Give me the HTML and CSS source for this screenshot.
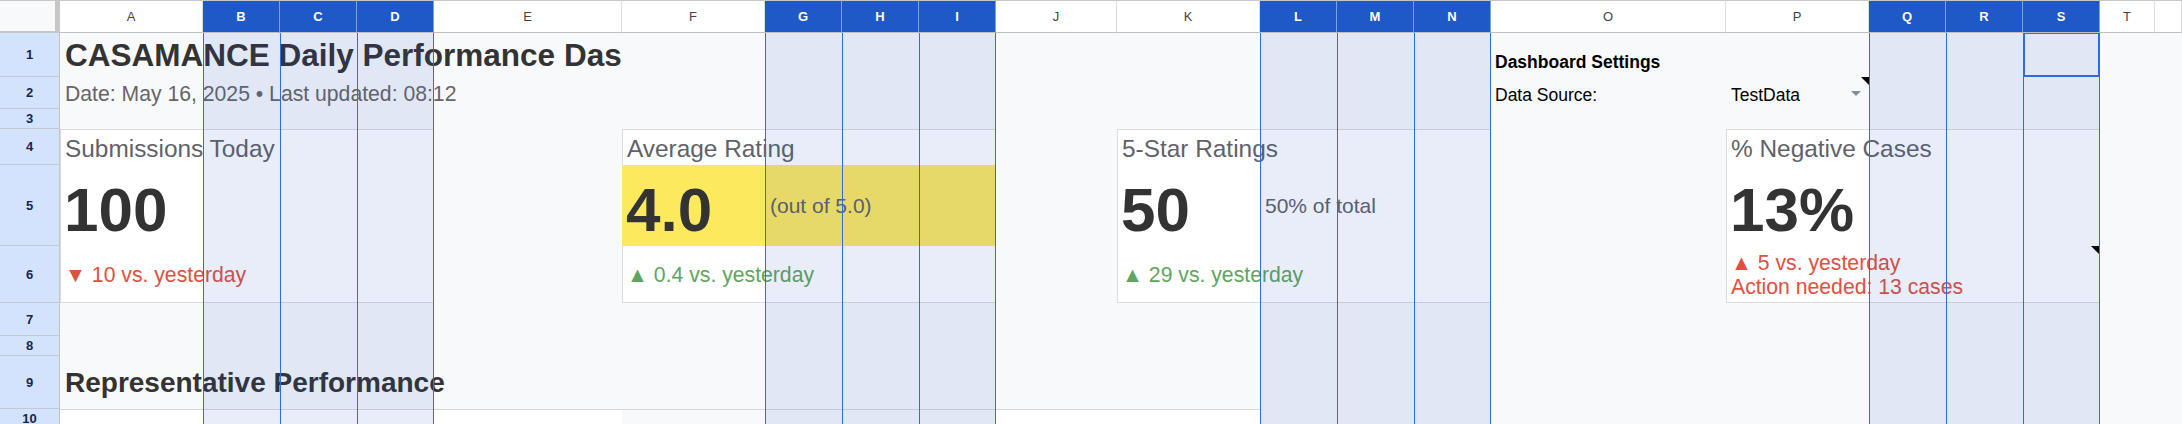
FILE: index.html
```html
<!DOCTYPE html>
<html lang="en">
<head>
<meta charset="utf-8">
<title>CASAMANCE Daily Performance Dashboard</title>
<link rel="stylesheet" href="styles.css">
</head>
<body>
<div class="sheet">
  <!-- column headers -->
  <div class="corner"></div>
  <div class="ch">A</div>
  <div class="ch sel">B</div>
  <div class="ch sel">C</div>
  <div class="ch sel">D</div>
  <div class="ch">E</div>
  <div class="ch">F</div>
  <div class="ch sel">G</div>
  <div class="ch sel">H</div>
  <div class="ch sel">I</div>
  <div class="ch">J</div>
  <div class="ch">K</div>
  <div class="ch sel">L</div>
  <div class="ch sel">M</div>
  <div class="ch sel">N</div>
  <div class="ch">O</div>
  <div class="ch">P</div>
  <div class="ch sel">Q</div>
  <div class="ch sel">R</div>
  <div class="ch sel">S</div>
  <div class="ch">T</div>
  <div class="ch"></div>

  <!-- row headers -->
  <div class="rh">1</div>
  <div class="rh">2</div>
  <div class="rh">3</div>
  <div class="rh">4</div>
  <div class="rh">5</div>
  <div class="rh">6</div>
  <div class="rh">7</div>
  <div class="rh">8</div>
  <div class="rh">9</div>
  <div class="rh">10</div>

  <!-- header block -->
  <div class="title">CASAMANCE Daily Performance Dashboard</div>
  <div class="subtitle">Date: May 16, 2025 • Last updated: 08:12</div>

  <div class="settings-title">Dashboard Settings</div>
  <div class="settings-label">Data Source:</div>
  <div class="settings-value">
    <span>TestData</span>
    <span class="dd-arrow"></span>
    <span class="note"></span>
  </div>

  <!-- KPI cards -->
  <div class="card card-1">
    <div class="kpi-label">Submissions Today</div>
    <div class="kpi-value">100</div>
    <div class="kpi-change down">▼ 10 vs. yesterday</div>
  </div>

  <div class="card card-2">
    <div class="kpi-label">Average Rating</div>
    <div class="kpi-band"></div>
    <div class="kpi-value">4.0</div>
    <div class="kpi-aside">(out of 5.0)</div>
    <div class="kpi-change up">▲ 0.4 vs. yesterday</div>
  </div>

  <div class="card card-3">
    <div class="kpi-label">5-Star Ratings</div>
    <div class="kpi-value">50</div>
    <div class="kpi-aside">50% of total</div>
    <div class="kpi-change up">▲ 29 vs. yesterday</div>
  </div>

  <div class="card card-4">
    <div class="kpi-label">% Negative Cases</div>
    <div class="kpi-value">13%</div>
    <div class="kpi-change down multi">
      <span>▲ 5 vs. yesterday</span>
      <span>Action needed: 13 cases</span>
    </div>
  </div>

  <div class="section-title">Representative Performance</div>
  <div class="table-head th-1"></div>
  <div class="table-head th-2"></div>
  <div class="table-head th-3"></div>

  <!-- column selection overlays -->
  <div class="sel-col col-b"></div>
  <div class="sel-col col-c"></div>
  <div class="sel-col col-d end"></div>
  <div class="sel-col col-g"></div>
  <div class="sel-col col-h"></div>
  <div class="sel-col col-i end"></div>
  <div class="sel-col col-l"></div>
  <div class="sel-col col-m"></div>
  <div class="sel-col col-n end"></div>
  <div class="sel-col col-q"></div>
  <div class="sel-col col-r"></div>
  <div class="sel-col col-s end"></div>

  <div class="active-cell"></div>
  <div class="note-cell"><span class="note-tri"></span></div>
</div>
</body>
</html>
```

FILE: styles.css
```css
* { box-sizing: border-box; }

html, body {
  margin: 0;
  padding: 0;
}

body {
  width: 2182px;
  height: 424px;
  overflow: hidden;
  background: #f8f9fa;
  font-family: "Liberation Sans", Arial, sans-serif;
}

.sheet {
  display: grid;
  grid-template-columns: 60px 143px 77px 77px 77px 188px 143px 77px 77px 77px 121px 143px 77px 77px 77px 235px 143px 77px 77px 77px 55px 1fr;
  grid-template-rows: 33px 44px 32px 20px 36px 81px 57px 33px 20px 53px 20px;
  width: 2182px;
  height: 429px;
  background: #f8f9fa;
}

/* ---------- headers ---------- */
.corner {
  grid-row: 1;
  background: #f8f9fa;
  border-top: 1px solid #c7c7c7;
  border-right: 5px solid #c6c6c6;
  border-bottom: 2px solid #c6c6c6;
}

.ch {
  grid-row: 1;
  display: flex;
  align-items: center;
  justify-content: center;
  background: #fff;
  border-top: 1px solid #c7c7c7;
  border-bottom: 1px solid #c0c0c0;
  border-right: 1px solid #dadce0;
  color: #444;
  font-family: "Liberation Sans", Arial, sans-serif;
  font-size: 13px;
}

.ch.sel {
  background: #1f58c7;
  color: #fff;
  font-weight: bold;
  border-right-color: #7e9ee0;
}

.rh {
  grid-column: 1;
  display: flex;
  align-items: center;
  justify-content: center;
  background: #d3e3fd;
  border-right: 1px solid #c4c4c4;
  border-bottom: 1px solid #c3c9d3;
  color: #14274e;
  font-size: 13px;
  font-weight: bold;
  overflow: hidden;
}

/* ---------- title block ---------- */
.title {
  grid-column: 2 / 7;
  grid-row: 2;
  display: flex;
  align-items: center;
  padding: 1px 0 0 5px;
  overflow: hidden;
  white-space: nowrap;
  font-size: 31.5px;
  font-weight: bold;
  color: #333;
}

.subtitle {
  grid-column: 2 / 7;
  grid-row: 3;
  display: flex;
  align-items: flex-end;
  padding: 0 0 3px 5px;
  white-space: nowrap;
  font-size: 21.2px;
  color: #666;
}

.settings-title {
  grid-column: 16;
  grid-row: 2;
  display: flex;
  align-items: flex-end;
  padding: 0 0 4px 4px;
  white-space: nowrap;
  font-size: 17.5px;
  font-weight: bold;
  color: #000;
}

.settings-label {
  grid-column: 16;
  grid-row: 3;
  display: flex;
  align-items: flex-end;
  padding: 0 0 3px 4px;
  white-space: nowrap;
  font-size: 17.5px;
  color: #000;
}

.settings-value {
  grid-column: 17;
  grid-row: 3;
  position: relative;
  display: flex;
  align-items: flex-end;
  justify-content: space-between;
  padding: 0 8px 3px 5px;
  white-space: nowrap;
  font-size: 17.5px;
  color: #000;
}

.dd-arrow {
  align-self: center;
  margin-top: 4px;
  width: 0;
  height: 0;
  border-left: 5px solid transparent;
  border-right: 5px solid transparent;
  border-top: 5px solid #86909c;
}

.note {
  position: absolute;
  top: 0;
  right: 0;
  width: 0;
  height: 0;
  border-top: 8px solid #000;
  border-left: 8px solid transparent;
}

/* ---------- KPI cards ---------- */
.card {
  grid-row: 5 / 8;
  display: grid;
  grid-template-columns: 143px 77px 77px 77px;
  grid-template-rows: 36px 81px 57px;
  background: #fff;
  box-shadow: inset 1px 1px 0 #dadce0, inset 0 -1px 0 #dadce0;
}

.card-1 { grid-column: 2 / 6; }
.card-2 { grid-column: 7 / 11; }
.card-3 { grid-column: 12 / 16; }
.card-4 { grid-column: 17 / 21; }

.kpi-label {
  grid-column: 1 / -1;
  grid-row: 1;
  display: flex;
  align-items: flex-end;
  padding: 0 0 2px 5px;
  white-space: nowrap;
  font-size: 24.4px;
  color: #5f6368;
}

.kpi-band {
  grid-column: 1 / -1;
  grid-row: 2;
  background: #fde95e;
}

.kpi-value {
  grid-column: 1;
  grid-row: 2;
  display: flex;
  align-items: flex-end;
  padding: 0 0 1px 4px;
  white-space: nowrap;
  font-size: 62px;
  font-weight: bold;
  color: #333;
}

.kpi-aside {
  grid-column: 2 / -1;
  grid-row: 2;
  display: flex;
  align-items: center;
  padding: 0 0 0 5px;
  white-space: nowrap;
  font-size: 21px;
  color: #5f6368;
}

.kpi-change {
  grid-column: 1 / -1;
  grid-row: 3;
  display: flex;
  align-items: center;
  padding: 0 0 0 5px;
  white-space: nowrap;
  font-size: 21.2px;
}

.kpi-change.multi {
  flex-direction: column;
  align-items: flex-start;
  justify-content: center;
  line-height: 24px;
}

.down { color: #e0503f; }
.up { color: #5fa55d; }

/* ---------- section ---------- */
.section-title {
  grid-column: 2 / 7;
  grid-row: 10;
  display: flex;
  align-items: center;
  padding: 0 0 0 5px;
  white-space: nowrap;
  font-size: 28px;
  font-weight: bold;
  color: #333;
}

.table-head {
  grid-row: 11;
  background: #fff;
  border-top: 1px solid #d5d7db;
}

.th-1 { grid-column: 2 / 7; }
.th-2 { grid-column: 7 / 11; background: transparent; }
.th-3 { grid-column: 11 / 13; }

/* ---------- selection overlays ---------- */
.sel-col {
  grid-row: 2 / -1;
  z-index: 2;
  background: rgba(30, 80, 200, 0.1);
  border-left: 1px solid #2a6fdb;
  pointer-events: none;
}

.sel-col.end { border-right: 1px solid #2a6fdb; }

.col-b { grid-column: 3; }
.col-c { grid-column: 4; }
.col-d { grid-column: 5; }
.col-g { grid-column: 8; }
.col-h { grid-column: 9; }
.col-i { grid-column: 10; }
.col-l { grid-column: 13; }
.col-m { grid-column: 14; }
.col-n { grid-column: 15; }
.col-q { grid-column: 18; }
.col-r { grid-column: 19; }
.col-s { grid-column: 20; }

.active-cell {
  grid-column: 20;
  grid-row: 2;
  z-index: 3;
  border: 2px solid #2a6fdb;
  border-top-width: 1px;
}

.note-cell {
  grid-column: 20;
  grid-row: 7;
  z-index: 3;
  display: flex;
  justify-content: flex-end;
  align-items: flex-start;
  padding-right: 1px;
}

.note-tri {
  width: 0;
  height: 0;
  border-top: 8px solid #000;
  border-left: 8px solid transparent;
}
```
